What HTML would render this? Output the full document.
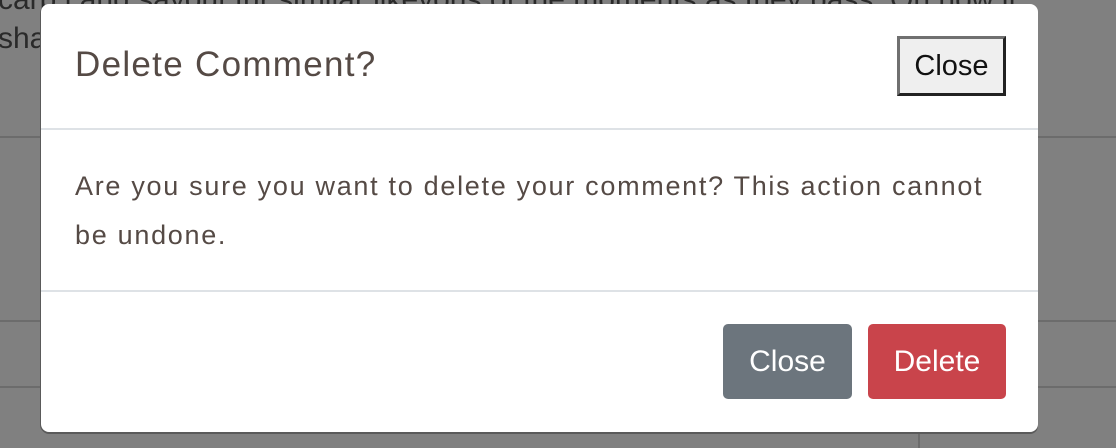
<!DOCTYPE html>
<html><head><meta charset="utf-8"><style>
html,body{margin:0;padding:0;}
body{width:1116px;height:448px;background:#808080;position:relative;overflow:hidden;font-family:"Liberation Sans",sans-serif;}
.bgt{position:absolute;left:-2px;color:#2a2a2a;font-size:30px;font-weight:300;white-space:nowrap;}
.hl{position:absolute;height:2px;background:#6c6c6c;}
.modal{position:absolute;left:41px;top:4px;width:997px;height:428px;background:#fff;border-radius:8px;box-shadow:-1px 1px 0 #5a5a5a, 0 2px 0 #5a5a5a;}
.title{position:absolute;left:34px;top:41px;font-size:35px;color:#554a45;letter-spacing:1.3px;}
.xbtn{position:absolute;left:856px;top:32px;width:103px;height:54px;background:#efefef;border:3px solid;border-color:#707070 #222 #222 #707070;font-size:29px;color:#111;text-align:center;line-height:54px;}
.div{position:absolute;left:0;width:997px;height:2px;background:#dee2e6;}
.body{position:absolute;left:34px;top:158px;width:930px;font-size:27px;line-height:49px;color:#554a45;letter-spacing:1.7px;}
.btn{position:absolute;top:320px;height:75px;border-radius:5px;color:#fff;font-size:30px;text-align:center;line-height:75px;}
</style></head><body>
<div class="bgt" style="top:-17px">carp l and sayout fur similar likeyous of the moments as they pass. Oh how it</div>
<div class="bgt" style="top:22px">sha</div>
<div class="hl" style="left:0;top:136px;width:41px"></div>
<div class="hl" style="left:0;top:320px;width:41px"></div>
<div class="hl" style="left:0;top:386px;width:41px"></div>
<div class="hl" style="left:1038px;top:136px;width:78px"></div>
<div class="hl" style="left:1038px;top:320px;width:78px"></div>
<div class="hl" style="left:1038px;top:386px;width:78px"></div>
<div style="position:absolute;left:918px;top:432px;width:2px;height:16px;background:#6c6c6c"></div>
<div class="modal">
<div class="title">Delete Comment?</div>
<div class="xbtn">Close</div>
<div class="div" style="top:124px"></div>
<div class="body">Are you sure you want to delete your comment? This action cannot be undone.</div>
<div class="div" style="top:286px"></div>
<div class="btn" style="left:682px;width:129px;background:#6c757d">Close</div>
<div class="btn" style="left:827px;width:138px;background:#c9444b">Delete</div>
</div>
</body></html>
